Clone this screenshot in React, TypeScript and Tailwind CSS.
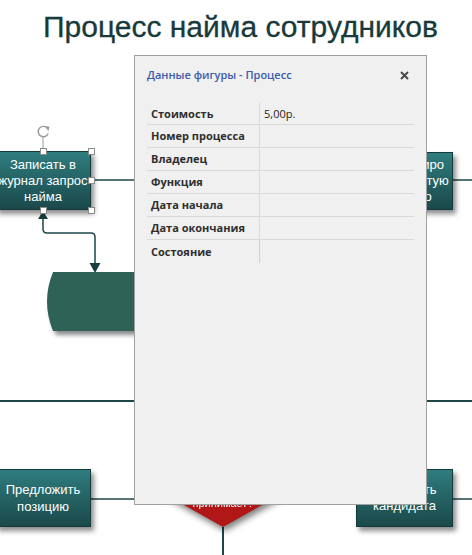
import React from "react"

const rows = [
    { label: "Стоимость", value: "5,00р." },
    { label: "Номер процесса", value: "" },
    { label: "Владелец", value: "" },
    { label: "Функция", value: "" },
    { label: "Дата начала", value: "" },
    { label: "Дата окончания", value: "" },
    { label: "Состояние", value: "" },
]

const ProcessBox = ({ lines, className }: { lines: string[]; className: string }) => (
    <div
        className={`absolute flex flex-col items-center justify-center border border-[#143a3b] bg-linear-to-b from-[#2f7d7f] to-[#1b494b] text-white text-[13px] leading-[16px] shadow-[3px_4px_5px_rgba(0,0,0,0.45)] whitespace-nowrap ${className}`}
    >
        {lines.map((l) => (
            <span key={l}>{l}</span>
        ))}
    </div>
)

const ShapeDataPanel = () => (
    <div className="absolute left-[134px] top-[55px] w-[293px] h-[450px] bg-[#f0f0f0] border border-[#a0a0a0] font-['Open_Sans','Liberation_Sans',sans-serif]">
        <div className="flex items-center justify-between pl-3 pr-[17px] pt-[12px] h-[26px]">
            <span className="text-[11px] font-semibold text-[#3b5bab] leading-[14px]">
                Данные фигуры - Процесс
            </span>
            <svg width="9" height="9" viewBox="0 0 9 9">
                <path d="M1 1 L8 8 M8 1 L1 8" stroke="#4a4a4a" strokeWidth="2" />
            </svg>
        </div>
        <div className="mt-[21px] mx-3 grid grid-cols-[112px_1fr]">
            {rows.map((r, i) => (
                <React.Fragment key={r.label}>
                    <div
                        className={`pl-1 pt-[1px] flex items-center text-[11px] font-bold text-[#2e2e2e] ${
                            i === 0 ? "h-[22px]" : "h-[23px]"
                        } ${i < rows.length - 1 ? "border-b border-[#d9d9d9]" : ""}`}
                    >
                        {r.label}
                    </div>
                    <div
                        className={`pl-1 pt-[1px] flex items-center text-[11px] text-[#1e1e1e] border-l border-[#d0d0d0] ${
                            i === 0 ? "h-[22px]" : "h-[23px]"
                        } ${i < rows.length - 1 ? "border-b border-[#d9d9d9]" : ""}`}
                    >
                        {r.value}
                    </div>
                </React.Fragment>
            ))}
        </div>
    </div>
)

export default function App() {
    return (
        <div className="relative w-[472px] h-[555px] overflow-hidden bg-white font-['Liberation_Sans',Arial,sans-serif]">
            <h1 className="absolute left-[43px] top-[12px] text-[30px] leading-none text-[#183a3b] whitespace-nowrap [-webkit-text-stroke:0.3px_#183a3b]">
                Процесс найма сотрудников
            </h1>

            {/* connectors and shapes */}
            <svg className="absolute inset-0" width="472" height="555">
                <defs>
                    <filter id="sh" x="-20%" y="-20%" width="140%" height="160%">
                        <feDropShadow dx="3" dy="4" stdDeviation="2" floodColor="#000" floodOpacity="0.45" />
                    </filter>
                </defs>
                <g stroke="#1d4647" fill="none">
                    <path d="M91 180 H357" strokeWidth="1.5" />
                    <path d="M453 180 H472" strokeWidth="1.5" />
                    <path d="M0 401 H472" strokeWidth="2" />
                    <path d="M91 499 H356" strokeWidth="1.5" />
                    <path d="M453 499 H472" strokeWidth="1.5" />
                    <path d="M223 527 V555" strokeWidth="2" />
                    <path d="M43 214 V229 Q43 233 47 233 H91 Q95 233 95 237 V265" strokeWidth="1.5" />
                </g>
                <path d="M38 219 L43 211 L48 219 Z" fill="#1a3e3f" />
                <path d="M89.5 263 L100.5 263 L95 273 Z" fill="#1a3e3f" />
                <path d="M53 272 H160 V331 H53 Q41 301.5 53 272 Z" fill="#2d6256" filter="url(#sh)" />
            </svg>

            <ProcessBox lines={["Записать в", "журнал запрос", "найма"]} className="left-[-5px] top-[151px] w-[96px] h-[59px]" />
            <ProcessBox lines={["Зарезервиро", "вать открытую", "на место"]} className="left-[357px] top-[152px] w-[96px] h-[58px]" />
            <ProcessBox lines={["Предложить", "позицию"]} className="left-[-5px] top-[469px] w-[96px] h-[58px] leading-[17px]" />
            <ProcessBox lines={["Отклонить", "кандидата"]} className="left-[356px] top-[469px] w-[97px] h-[58px]" />

            <div className="absolute left-[143px] top-[437px] w-[160px] h-[90px] drop-shadow-[2px_4px_3px_rgba(0,0,0,0.5)]">
                <div className="w-full h-full bg-[#b01818] [clip-path:polygon(50%_0,100%_50%,50%_100%,0_50%)] flex flex-col items-center justify-end pb-[17px] text-white text-[11px] leading-[14px]">
                    <span>Кандидат</span>
                    <span>принимает?</span>
                </div>
            </div>

            {/* selection handles */}
            <svg className="absolute inset-0 pointer-events-none" width="472" height="555">
                <path d="M43 136.5 V148" stroke="#9a9a9a" strokeWidth="1" />
                <path d="M47.6 128.5 A5.2 5.2 0 1 0 48.2 133.5" stroke="#9a9a9a" strokeWidth="1.4" fill="none" />
                <path d="M45.2 126 L49.6 126.8 L48.3 131.2 Z" fill="#9a9a9a" />
                <g fill="#fff" stroke="#8a8a8a" strokeWidth="1">
                    <rect x="40.5" y="148.5" width="6" height="6" />
                    <rect x="88.5" y="148.5" width="6" height="6" />
                    <rect x="88.5" y="177.5" width="6" height="6" />
                    <rect x="88.5" y="207.5" width="6" height="6" />
                    <rect x="40.5" y="207.5" width="6" height="6" />
                </g>
            </svg>

            <ShapeDataPanel />
        </div>
    )
}
